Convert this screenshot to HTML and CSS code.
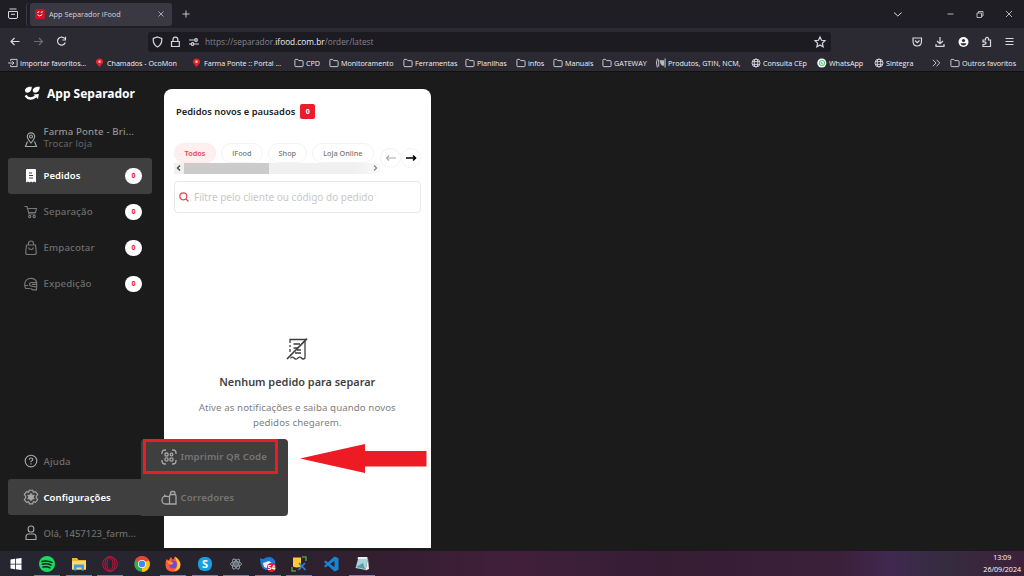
FILE: index.html
```html
<!DOCTYPE html>
<html lang="pt-BR">
<head>
    <meta charset="UTF-8">
    <title>App Separador iFood</title>
    <link rel="stylesheet" href="styles.css">
</head>
<body>
    <svg class="defs">
        <symbol id="folder" viewBox="0 0 11 10"><path d="M1 8V2Q1 1 2 1H4L5.2 2.4H9Q10 2.4 10 3.4V8Q10 9 9 9H2Q1 9 1 8Z"/></symbol>
        <symbol id="globe" viewBox="0 0 11 10"><circle cx="5.5" cy="5" r="4.4"/><ellipse cx="5.5" cy="5" rx="2" ry="4.4"/><path d="M1.5 3.5H9.5M1.5 6.5H9.5"/></symbol>
        <symbol id="pin" viewBox="0 0 11 10"><path d="M5 0C2.5 0 1 1.6 1 3.6C1 6 4 7 5 10C6 7 9 6 9 3.6C9 1.6 7.500 0 5 0Z" fill="#e8202d" stroke="none"/><circle cx="5" cy="3.500" r="1.300" fill="#fbdada" stroke="none"/></symbol>
    </svg>

    <!-- browser -->
    <div class="tabbar">
        <svg class="view-icon" viewBox="0 0 12 12"><path d="M2.500 1H9.500M1.500 3.500H10.500V9Q10.500 10.500 9 10.500H3Q1.500 10.500 1.500 9ZM4 6.300H8"/></svg>
        <div class="tab">
            <svg class="favicon" viewBox="0 0 10 10"><rect width="10" height="10" rx="1.500" fill="#c51528" stroke="none"/><path d="M2 3.800Q2.200 2.200 4.500 2.300Q4.200 4.200 2 3.800ZM5.500 3.800Q5.700 2.200 8 2.300Q7.700 4.200 5.500 3.800Z" fill="#fff" stroke="none"/><path d="M2.500 5.800Q4.500 8.300 7.300 5.500" fill="none" stroke="#fff"/></svg>
            <span class="tab-title">App Separador iFood</span>
            <svg class="tab-close" viewBox="0 0 6 6"><path d="M.5 .5L5.500 5.500M5.500 .5L.5 5.500"/></svg>
        </div>
        <svg class="plus" viewBox="0 0 9 9"><path d="M4.500 .5V8.500M.5 4.500H8.500"/></svg>
        <svg class="window-controls" viewBox="0 0 122 10"><path d="M1 3.500L4.800 7L8.600 3.500"/><path d="M54.500 5H60.500M84 4H88.500V8.500H84ZM85.500 4V2.500H90V7H88.500M113 2L119 8M119 2L113 8" stroke-width=".8"/></svg>
    </div>
    <div class="navbar">
        <svg class="nav-icons" viewBox="0 0 60 12"><path d="M9.500 5.500H1M4.500 2L1 5.500L4.500 9"/><path d="M24 5.500H32.500M29 2L32.500 5.500L29 9" stroke="#6d6c75"/><path d="M54.700 2.700A4 4 0 1 0 55.300 6.500M55.500 .8V4H52.300"/></svg>
        <div class="urlbar">
            <svg class="url-icons" viewBox="0 0 48 12"><path d="M5.500 1L9.800 2.500C10 7 8.500 9.500 5.500 11C2.500 9.500 1 7 1.200 2.500Z"/><path d="M19.500 5.500H27.300V10.500H19.500ZM21 5.500V3.500Q21 1.200 23.400 1.200Q25.800 1.200 25.800 3.500V5.500"/><path d="M37 4H42M37 8H39M42 8H47"/><circle cx="44" cy="4" r="1.300"/><circle cx="40.500" cy="8" r="1.300"/></svg>
            <span class="url">https://separador.<b>ifood.com.br</b>/order/latest</span>
            <svg class="star" viewBox="0 0 12 12"><path d="M6 1L7.500 4.300L11 4.700L8.400 7.100L9.100 10.700L6 8.900L2.900 10.700L3.600 7.100L1 4.700L4.500 4.300Z"/></svg>
        </div>
        <svg class="nav-right" viewBox="0 0 104 12"><path d="M1 2H9.500V5Q9.500 10 5.250 10Q1 10 1 5ZM3 4.500L5.250 6.700L7.500 4.500"/><path d="M28 1V7.500M25 5L28 7.800L31 5M24 8V10.300H32V8"/><circle cx="51.500" cy="6" r="5" fill="#fbfbfe" stroke="none"/><circle cx="51.500" cy="4.500" r="1.600" fill="#2b2a33" stroke="none"/><path d="M48.500 7.200H54.500Q54 9.500 51.500 9.500Q49 9.500 48.500 7.200Z" fill="#2b2a33" stroke="none"/><path d="M71 4H73.500V2.500Q75 .3 76.500 2.500V4H78.500V10.500H71V8.500Q74 8.500 74 7Q74 5.800 71 6Z"/><path d="M93.500 2.500H101.500M93.500 5.500H101.500M93.500 8.500H101.500"/></svg>
    </div>
    <div class="bookmarks">
        <span><svg viewBox="0 0 11 10"><path d="M3 3V1H10V9H3V7M0 5H6.500M4.500 3L6.500 5L4.500 7"/></svg>Importar favoritos...</span>
        <span><svg><use href="#pin"/></svg>Chamados - OcoMon</span>
        <span><svg><use href="#pin"/></svg>Farma Ponte :: Portal ...</span>
        <span><svg><use href="#folder"/></svg>CPD</span>
        <span><svg><use href="#folder"/></svg>Monitoramento</span>
        <span><svg><use href="#folder"/></svg>Ferramentas</span>
        <span><svg><use href="#folder"/></svg>Planilhas</span>
        <span><svg><use href="#folder"/></svg>infos</span>
        <span><svg><use href="#folder"/></svg>Manuais</span>
        <span><svg><use href="#folder"/></svg>GATEWAY</span>
        <span><svg viewBox="0 0 11 10"><path d="M1.500 0Q-.5 5 1.500 10M3 1V9M10 0V10"/><path d="M4 2H9V8H7L5 6Z" fill="#bbb" stroke="none"/></svg>Produtos, GTIN, NCM,</span>
        <span><svg><use href="#globe"/></svg>Consulta CEp</span>
        <span><svg viewBox="0 0 11 10"><circle cx="5.300" cy="5" r="5" fill="#fff" stroke="none"/><circle cx="5.400" cy="4.900" r="3" fill="#d6f5df" stroke="#45c96b"/><path d="M4.300 3.800Q4.500 5.800 6.500 6" stroke="#45c96b"/></svg>WhatsApp</span>
        <span><svg><use href="#globe"/></svg>Sintegra</span>
        <span><svg viewBox="0 0 11 10"><path d="M1 1.500L4.500 5L1 8.500M5 1.500L8.500 5L5 8.500"/></svg></span>
        <span><svg><use href="#folder"/></svg>Outros favoritos</span>
    </div>

    <!-- app -->
    <div class="app">
        <div class="sidebar">
            <div class="brand">
                <svg viewBox="0 0 16 15"><path d="M1 4.500C1 2 4 .2 7.700 .8C8 4 5.800 6.700 3.300 6.700Q1 6.700 1 4.500ZM8.700 4.500C8.700 2 12 .2 15.700 .8C16 4 13.800 6.700 11.300 6.700Q8.700 6.700 8.700 4.500Z" fill="#fff"/><path d="M1.500 9.500Q5.500 15 11.800 10.500" fill="none" stroke="#fff" stroke-width="2.200"/><path d="M9.500 8.500L14.800 8L14 13Z" fill="#fff"/></svg>
                App Separador
            </div>
            <div class="store">
                <svg class="icon light" viewBox="0 0 14 16"><path d="M7 11C4.500 8 3.300 6.500 3.300 4.500A3.700 3.700 0 0 1 10.700 4.500C10.700 6.500 9.500 8 7 11ZM3.500 9.500L1.500 14.500H12.500L10.500 9.500"/><circle cx="7" cy="4.500" r="1.500"/></svg>
                <div>
                    <div class="store-name">Farma Ponte - Bri...</div>
                    <div class="store-change">Trocar loja</div>
                </div>
            </div>
            <div class="item active">
                <svg class="icon" viewBox="0 0 14 16"><path d="M3 1H11Q12 1 12 2V14.500L10 13.500L8.500 14.500L7 13.500L5.500 14.500L4 13.500L2 14.500V2Q2 1 3 1Z" fill="#fff" stroke="none"/><path d="M5 5H8M5 7.500H9M5 10H9" stroke="#3f3f3f"/></svg>
                <span class="label">Pedidos</span><span class="badge">0</span>
            </div>
            <div class="item">
                <svg class="icon" viewBox="0 0 14 16"><path d="M.5 2.500H3L5 10H11.500M3.500 4.500H12.500L11.500 8.500H4.700"/><circle cx="5.700" cy="12.500" r="1.100"/><circle cx="10.200" cy="12.500" r="1.100"/></svg>
                <span class="label">Separação</span><span class="badge">0</span>
            </div>
            <div class="item">
                <svg class="icon" viewBox="0 0 14 16"><path d="M2.500 5H11.500L12.300 12.500Q12.300 14.500 10.500 14.500H3.500Q1.700 14.500 1.700 12.500ZM4.500 5V3.500Q4.500 1 7 1Q9.500 1 9.500 3.500V5M4.500 7.500Q5 9.500 7 9.500Q9 9.500 9.500 7.500"/></svg>
                <span class="label">Empacotar</span><span class="badge">0</span>
            </div>
            <div class="item">
                <svg class="icon" viewBox="0 0 14 16"><path d="M12.700 6.500C12 3.500 9.500 2.300 7 2.300C3 2.300 .7 5 .7 8.500Q.7 11 1.700 12.500H6M1 9.500H4M12.700 6.500H8Q5.500 6.500 5.500 8.300Q5.500 10 8 10.300L12.700 11ZM6.500 12.500L9 13.800H12.500V11M8 8.300H12.500"/></svg>
                <span class="label">Expedição</span><span class="badge">0</span>
            </div>
            <div class="spacer"></div>
            <div class="item">
                <svg class="icon light" viewBox="0 0 14 16"><circle cx="7" cy="8" r="5.800"/><path d="M5.300 6.700Q5.300 5 7 5Q8.800 5 8.800 6.500Q8.800 7.500 7 8.300V9.200M7 10.300V11.500"/></svg>
                <span class="label">Ajuda</span>
            </div>
            <div class="item active settings">
                <svg class="icon light" viewBox="0 0 14 16"><path d="M5.300 1.200H8.700L9.300 3.200L11.500 2.700L13.700 5.500L12.300 7.200V8.800L13.700 10.500L11.500 13.300L9.300 12.800L8.700 14.800H5.300L4.700 12.800L2.500 13.300L.3 10.500L1.700 8.800V7.200L.3 5.500L2.500 2.700L4.700 3.200Z"/><circle cx="7" cy="8" r="2.300" fill="#aaa"/><path d="M7 4V12M3.500 6L10.500 10M10.500 6L3.500 10"/></svg>
                <span class="label">Configurações</span>
            </div>
            <div class="item">
                <svg class="icon light" viewBox="0 0 14 16"><rect x="4.200" y="1" width="5.600" height="6" rx="2.600"/><path d="M2 14.500V12Q2 9 4.500 9H9.500Q12 9 12 12V14.500Z"/></svg>
                <span class="label user">Olá, 1457123_farm...</span>
            </div>

            <div class="submenu">
                <div class="submenu-item">
                    <svg viewBox="0 0 16 16"><path d="M1 5V4Q1 1 4 1H5M11 1H12Q15 1 15 4V5M1 11V12Q1 15 4 15H5M11 15H12Q15 15 15 12V11"/><rect x="4" y="4" width="3" height="3" rx="1"/><circle cx="10.500" cy="5.500" r="1.300"/><circle cx="5.500" cy="10.500" r="1.600"/><circle cx="10.500" cy="10.500" r="1.600"/></svg>
                    Imprimir QR Code
                </div>
                <div class="submenu-item">
                    <svg viewBox="0 0 16 16"><path d="M8.500 6Q8.500 4.500 10 4.500H13.500Q15 4.500 15 6V14H8.500ZM9.500 4.500V3Q9.500 1.500 11 1.500H12.500Q14 1.500 14 3V4.500M8.500 7Q1 4.500 1 10Q1 14.200 5 14H8.500M4.500 7Q4.500 5 3 5"/></svg>
                    Corredores
                </div>
                <div class="highlight"></div>
            </div>
        </div>

        <div class="panel">
            <div class="panel-title">Pedidos novos e pausados<span class="count">0</span></div>
            <div class="filters">
                <div class="filter-scroll">
                    <div class="chips">
                        <span class="chip selected">Todos</span>
                        <span class="chip">iFood</span>
                        <span class="chip">Shop</span>
                        <span class="chip">Loja Online</span>
                    </div>
                    <div class="scrollbar">
                        <svg viewBox="0 0 5 8"><path d="M4 1.500L1.500 4L4 6.500"/></svg>
                        <div class="thumb"></div>
                        <svg class="next" viewBox="0 0 5 8"><path d="M1 1.500L3.500 4L1 6.500"/></svg>
                    </div>
                </div>
                <div class="arrow"><svg viewBox="0 0 12 10"><path d="M11 5H1.500M4 2.500L1.500 5L4 7.500"/></svg></div>
                <div class="arrow on"><svg viewBox="0 0 12 10"><path d="M1 5H10.500M8 2.500L10.500 5L8 7.500"/></svg></div>
            </div>
            <div class="search">
                <svg viewBox="0 0 10 10"><circle cx="4.300" cy="4.300" r="3.500"/><path d="M7 7L9.500 9.500"/></svg>
                Filtre pelo cliente ou código do pedido
            </div>
            <div class="empty">
                <svg viewBox="0 0 22 22"><path d="M4 5V1.500H19V20Q17 22 15.500 20Q13.500 18 11.500 20.500Q9.500 22 8 20Q6 18 4.500 20.500M4 7V9M4 11V14M7.500 6H14M7.500 10H12M11 12H15M9 15H15"/><path d="M1 21L21 .7" stroke-width="1.700"/></svg>
                <h3>Nenhum pedido para separar</h3>
                <p>Ative as notificações e saiba quando novos<br>pedidos chegarem.</p>
            </div>
        </div>

        <svg class="callout" viewBox="0 0 127 30"><path d="M0 14.500L65 0V7H126.500V22.500H65V29Z"/></svg>
    </div>

    <!-- windows taskbar -->
    <div class="taskbar">
        <div class="task"><svg viewBox="0 0 18 18"><path d="M3.500 4.500L8 3.800V8.700H3.500ZM8.800 3.700L14.500 3V8.700H8.800ZM3.500 9.500H8V14.200L3.500 13.500ZM8.800 9.500H14.500V15L8.800 14.300Z" fill="#fff"/></svg></div>
        <div class="task open"><svg viewBox="0 0 18 18"><circle cx="9" cy="9" r="8" fill="#1ed760"/><path d="M4 6.500Q9 5 14 7.500M4.500 9.300Q9 8 13 10.200M5 12Q9 11 12 12.800" fill="none" stroke="#14251a" stroke-width="1.500" stroke-linecap="round"/></svg></div>
        <div class="task open"><svg viewBox="0 0 18 18"><path d="M2 3H7L8.500 5H16V14.500H2Z" fill="#eeb62e"/><path d="M2 6H16V14.500H2Z" fill="#ffda70"/><path d="M4 9.500H14V15.500H11.500V12.500H6.500V15.500H4Z" fill="#3f9de0"/></svg></div>
        <div class="task open"><svg viewBox="0 0 18 18"><g fill="none" stroke="#c5143d"><circle cx="9" cy="9" r="7.300"/><ellipse cx="9" cy="9" rx="5" ry="7.300"/><ellipse cx="9" cy="9" rx="3" ry="6"/></g></svg></div>
        <div class="task"><svg viewBox="0 0 18 18"><circle cx="9" cy="9" r="7.800" fill="#35a853"/><path d="M9 9L2.200 5.100A7.800 7.800 0 0 1 15.800 5.100Z" fill="#ea4335"/><path d="M9 9L15.800 5.100A7.800 7.800 0 0 1 9 16.800Z" fill="#fbc116"/><path d="M9 5.100H15.800" stroke="#ea4335"/><circle cx="9" cy="9" r="4" fill="#fff"/><circle cx="9" cy="9" r="3.200" fill="#4285f4"/></svg></div>
        <div class="task open"><svg viewBox="0 0 18 18"><path d="M2.500 4L4.500 5.500L7 2L9 5L11 1.500Q16.500 5 16.500 10Q16 16.800 9 16.800Q1.500 16.500 1.500 9.500Q1.500 6 2.500 4Z" fill="#ff5b36"/><path d="M11 1.500Q18 7 16 12Q14 16 10 16Q14.500 12 13 7.500Z" fill="#ffc928"/><circle cx="9" cy="9.500" r="3.900" fill="#7546d8"/><path d="M3 6Q8 5.500 9.500 8.500L6.500 10Q4.500 9.500 3 6Z" fill="#ff9b2e"/></svg></div>
        <div class="task open"><svg viewBox="0 0 18 18"><rect x="2" y="2" width="14" height="14" rx="6" fill="#179fe6"/><text x="9" y="13" text-anchor="middle" font-size="11" font-weight="700" fill="#fff">S</text></svg></div>
        <div class="task open"><svg viewBox="0 0 18 18"><g fill="none" stroke="#94a5ab" stroke-width=".9"><circle cx="9" cy="9" r="1.200"/><ellipse cx="9" cy="9" rx="5.500" ry="2.300"/><ellipse cx="9" cy="9" rx="5.500" ry="2.300" transform="rotate(60 9 9)"/><ellipse cx="9" cy="9" rx="5.500" ry="2.300" transform="rotate(120 9 9)"/></g></svg></div>
        <div class="task open"><svg viewBox="0 0 18 18"><path d="M1 3Q4 5 6 3Q13 0 16 6Q17 10 14 14Q8 17 3.500 13Q1 9 1 3Z" fill="#1979d6"/><path d="M4 8L10 6L14 9L10 14L5 12Z" fill="#e8f1fc"/><circle cx="12.500" cy="12.500" r="4.600" fill="#e91537"/><text x="12.500" y="15" text-anchor="middle" font-size="6.500" font-weight="700" fill="#fff">54</text></svg></div>
        <div class="task open"><svg viewBox="0 0 18 18"><path d="M3 2.500H11V11.500Q7 13.500 3 11.500Z" fill="#ffcb3d"/><path d="M12 2H16V6M2 12V16H6" fill="none" stroke="#4d9b43" stroke-width="1.500"/><path d="M9 8L15.500 15M15 8L8.500 15" stroke="#2980c5" stroke-width="1.800"/></svg></div>
        <div class="task"><svg viewBox="0 0 18 18"><path d="M12.500 1.500L16.500 3.300V14.700L12.500 16.500L2 7L3.500 5.500L12.500 12.300V5.700L3.500 12.500L2 11Z" fill="#1686d2"/></svg></div>
        <div class="task open"><svg viewBox="0 0 18 18"><path d="M5.500 2.500L15 3.500L12.500 15L2.500 13Z" fill="#a8d4da"/><path d="M5 2H14.500L14 4H4.500Z" fill="#e8f2f2"/><path d="M15 3.500L16 14L12.500 15.500Z" fill="#f2f1eb"/><path d="M3 12L10 8L12 14Z" fill="#5e9ca6"/></svg></div>
        <div class="clock">13:09<br>26/09/2024</div>
    </div>
</body>
</html>
```
FILE: styles.css
```css
* {
    box-sizing: border-box;
}

body {
    margin: 0;
    width: 1024px;
    height: 576px;
    overflow: hidden;
    background: #1b1b1b;
    font-family: "Noto Sans", sans-serif;
    display: flex;
    flex-direction: column;
}

svg {
    display: block;
    flex: none;
    overflow: visible;
}

.defs {
    width: 0;
    height: 0;
    position: absolute;
}

/* browser */
.tabbar, .navbar, .bookmarks {
    flex: none;
    display: flex;
    align-items: center;
    color: #f0f0f4;
    white-space: nowrap;
    font-family: "Open Sans", sans-serif;
}

.tabbar svg, .navbar svg, .bookmarks svg {
    fill: none;
    stroke: #d8d8df;
}

.tabbar {
    height: 28px;
    background: #1f1e25;
}

.view-icon {
    width: 12px;
    height: 12px;
    margin: 0 8px 0 7px;
}

.tab {
    height: 23px;
    width: 142px;
    margin-left: 3px;
    background: #3a3843;
    border-radius: 3px;
    display: flex;
    align-items: center;
    box-shadow: -3px 0 0 #1f1e25, -4px 0 0 #3a3a42;
}

.favicon {
    width: 10px;
    height: 10px;
    margin: 0 4px 0 5px;
}

.tab-title {
    font-size: 7.3px;
    flex: 1;
    color: #d5d5dc;
}

.tabbar .tab-close {
    width: 6px;
    height: 6px;
    margin-right: 8px;
    stroke: #a5a5ad;
}

.plus {
    width: 8px;
    height: 8px;
    margin-left: 9.5px;
}

.window-controls {
    width: 122px;
    height: 10px;
    margin-left: auto;
    margin-right: 9px;
}

.navbar {
    height: 27px;
    background: #2b2a33;
}

.navbar svg {
    stroke-width: 1.2;
}

.nav-icons {
    width: 60px;
    height: 12px;
    margin-left: 10px;
}

.urlbar {
    width: 683px;
    height: 20px;
    margin-left: 78px;
    padding: 0 5px 0 4px;
    background: #1c1b22;
    border-radius: 3px;
    display: flex;
    align-items: center;
}

.url-icons {
    width: 48px;
    height: 12px;
}

.url {
    flex: 1;
    margin-left: 5px;
    font-size: 8.3px;
    color: #85848d;
}

.url b {
    font-weight: 400;
    color: #f0f0f5;
}

.star {
    width: 12px;
    height: 12px;
}

.nav-right {
    width: 104px;
    height: 12px;
    margin-left: auto;
    margin-right: 8px;
}

.bookmarks {
    height: 17px;
    padding-left: 8px;
    background: #2b2a33;
    border-bottom: 1px solid #111114;
    display: grid;
    grid-template-columns: 87px 97px 102px 35px 74px 62px 51px 37px 49px 54px 95px 66px 57px 58px 18px 74px;
    font-size: 7.2px;
}

.bookmarks span {
    display: flex;
    align-items: center;
    gap: 2px;
    letter-spacing: -.03px;
}

.bookmarks svg {
    width: 10px;
    height: 10px;
}

/* app */
.app {
    position: relative;
    height: 479px;
    flex: none;
    display: flex;
    background: #1b1b1b;
}

.sidebar {
    position: relative;
    width: 163.5px;
    padding: 12px 11.5px 0 8px;
    display: flex;
    flex-direction: column;
}

.brand {
    height: 20px;
    padding-left: 16px;
    display: flex;
    align-items: center;
    gap: 7px;
    color: #fff;
    font-size: 12px;
    font-weight: 700;
    white-space: nowrap;
}

.brand svg {
    width: 16px;
    height: 15px;
}

.store {
    height: 36px;
    margin-top: 18px;
    padding: 0 0 3px 16px;
    display: flex;
    align-items: center;
    gap: 5.5px;
    font-size: 9.6px;
    letter-spacing: .15px;
    line-height: 12px;
    color: #666;
    white-space: nowrap;
}

.store .icon {
    margin-top: 3px;
}

.store-name {
    color: #949494;
    font-weight: 500;
}

.icon {
    width: 14px;
    height: 16px;
    fill: none;
    stroke: #777;
    stroke-width: 1.15;
}

.icon.light {
    stroke: #a6a6a6;
}

.item {
    height: 36px;
    flex: none;
    padding: 0 10px 0 16px;
    display: flex;
    align-items: center;
    gap: 5.5px;
    border-radius: 3px;
    color: #6d6d6d;
    font-size: 9.7px;
    letter-spacing: .12px;
    font-weight: 500;
    white-space: nowrap;
}

.active {
    background: #3f3f3f;
    color: #fff;
    font-size: 9.5px;
    font-weight: 600;
    letter-spacing: .05px;
}

.user {
    font-size: 9.5px;
    letter-spacing: 0;
}

.badge {
    width: 17px;
    height: 16px;
    margin-left: auto;
    border-radius: 8px;
    background: #fff;
    color: #ea1d2c;
    font-size: 7px;
    font-weight: 700;
    line-height: 16px;
    text-align: center;
}

.spacer {
    height: 141.500px;
    flex: none;
}

.submenu {
    position: absolute;
    z-index: 2;
    left: 141px;
    top: 366.500px;
    width: 146.500px;
    height: 77px;
    background: #3f3f3f;
    border-radius: 4px 4px 4px 0;
}

.submenu-item {
    height: 36px;
    padding-left: 20px;
    display: flex;
    align-items: center;
    gap: 3.5px;
    color: #757575;
    font-size: 9.7px;
    letter-spacing: .1px;
    font-weight: 600;
    white-space: nowrap;
}

.submenu-item + .submenu-item {
    margin-top: 5px;
}

.submenu-item svg {
    width: 16px;
    height: 16px;
    fill: none;
    stroke: #a6a6a6;
    stroke-width: 1.3;
}

.highlight {
    position: absolute;
    left: 2px;
    top: 0;
    width: 135px;
    height: 35px;
    border: 3px solid #ed1c24;
}

.panel {
    width: 267.5px;
    height: 459.5px;
    margin-top: 16.5px;
    padding: 13px 10px 0;
    background: #fff;
    border-radius: 8px 8px 0 0;
}

.panel-title {
    height: 20px;
    padding-left: 2.5px;
    display: flex;
    align-items: center;
    gap: 5px;
    color: #222;
    font-size: 9.35px;
    font-weight: 600;
    white-space: nowrap;
}

.count {
    width: 15px;
    height: 15px;
    border-radius: 2px;
    background: #ea1d2c;
    color: #fff;
    font-size: 7px;
    font-weight: 700;
    line-height: 15px;
    text-align: center;
}

.filters {
    height: 32px;
    margin-top: 21px;
    display: flex;
}

.filter-scroll {
    width: 207px;
}

.chips {
    display: flex;
    gap: 5px;
}

.chip {
    height: 20px;
    padding: 0 10px;
    border: 1px solid #f3f3f3;
    border-radius: 10px;
    color: #777;
    font-size: 7.3px;
    font-weight: 500;
    line-height: 18px;
    white-space: nowrap;
}

.chip.selected {
    background: #ffefef;
    border-color: #fdeaea;
    color: #ef4350;
    font-weight: 600;
}

.scrollbar {
    height: 11px;
    padding: 0 2px;
    display: flex;
    align-items: center;
    background: linear-gradient(90deg, #f0f0f0 88%, #fafafa);
}

.scrollbar svg {
    width: 5px;
    height: 8px;
    fill: none;
    stroke: #444;
    stroke-width: 1.3;
}

.scrollbar .next {
    margin-left: auto;
    stroke: #888;
}

.thumb {
    width: 85px;
    height: 11px;
    margin-left: 3.5px;
    background: #cbcbcb;
}

.arrow {
    width: 20.3px;
    height: 20px;
    margin-top: 5.5px;
    border: 1px solid #f3f3f3;
    border-radius: 50%;
    display: flex;
    align-items: center;
    justify-content: center;
}

.arrow svg {
    width: 12px;
    height: 10px;
    flex: none;
    fill: none;
    stroke: #aaa;
    stroke-width: 1.2;
}

.arrow.on svg {
    stroke: #000;
    stroke-width: 1.6;
}

.search {
    height: 32px;
    margin-top: 6.5px;
    padding-left: 4px;
    border: 1px solid #e8e8e8;
    border-radius: 4px;
    display: flex;
    align-items: center;
    gap: 5.5px;
    color: #c8c8c8;
    font-size: 10px;
    white-space: nowrap;
}

.search svg {
    width: 10px;
    height: 10px;
    fill: none;
    stroke: #e74550;
    stroke-width: 1.2;
}

.empty {
    margin-top: 125px;
    display: flex;
    flex-direction: column;
    align-items: center;
    text-align: center;
}

.empty svg {
    width: 22px;
    height: 22px;
    fill: none;
    stroke: #3f3f3f;
    stroke-width: 1.3;
}

.empty h3 {
    margin: 13px 0 0;
    color: #3f3f3f;
    font-size: 10.9px;
    font-weight: 600;
    line-height: 18px;
}

.empty p {
    margin: 9px 0 0;
    color: #808080;
    font-size: 9.7px;
    letter-spacing: .08px;
    line-height: 15px;
    white-space: nowrap;
}

.callout {
    position: absolute;
    left: 300px;
    top: 372px;
    width: 127px;
    height: 30px;
    fill: #ed1c24;
}

/* taskbar */
.taskbar {
    height: 25px;
    flex: none;
    display: flex;
    background: linear-gradient(90deg, #252631 0, #29232d 25%, #351e31 38%, #411f3b 50%, #351d34 65%, #3c203a 82%, #402850 87%, #352c40 92%, #3d2039 100%);
}

.task {
    width: 26px;
    height: 25px;
    margin-left: 5.5px;
    padding-top: 4px;
    display: flex;
    justify-content: center;
    border-bottom: 1px solid transparent;
}

.task:first-child {
    margin-left: 2.7px;
}

.task.open {
    border-bottom-color: #5b91bd;
}

.task svg {
    width: 18px;
    height: 18px;
}

.clock {
    margin-left: auto;
    margin-right: 3px;
    color: #fff;
    font-family: "Open Sans", sans-serif;
    font-size: 7.1px;
    line-height: 11.5px;
    padding-top: 1px;
    text-align: center;
}
```
